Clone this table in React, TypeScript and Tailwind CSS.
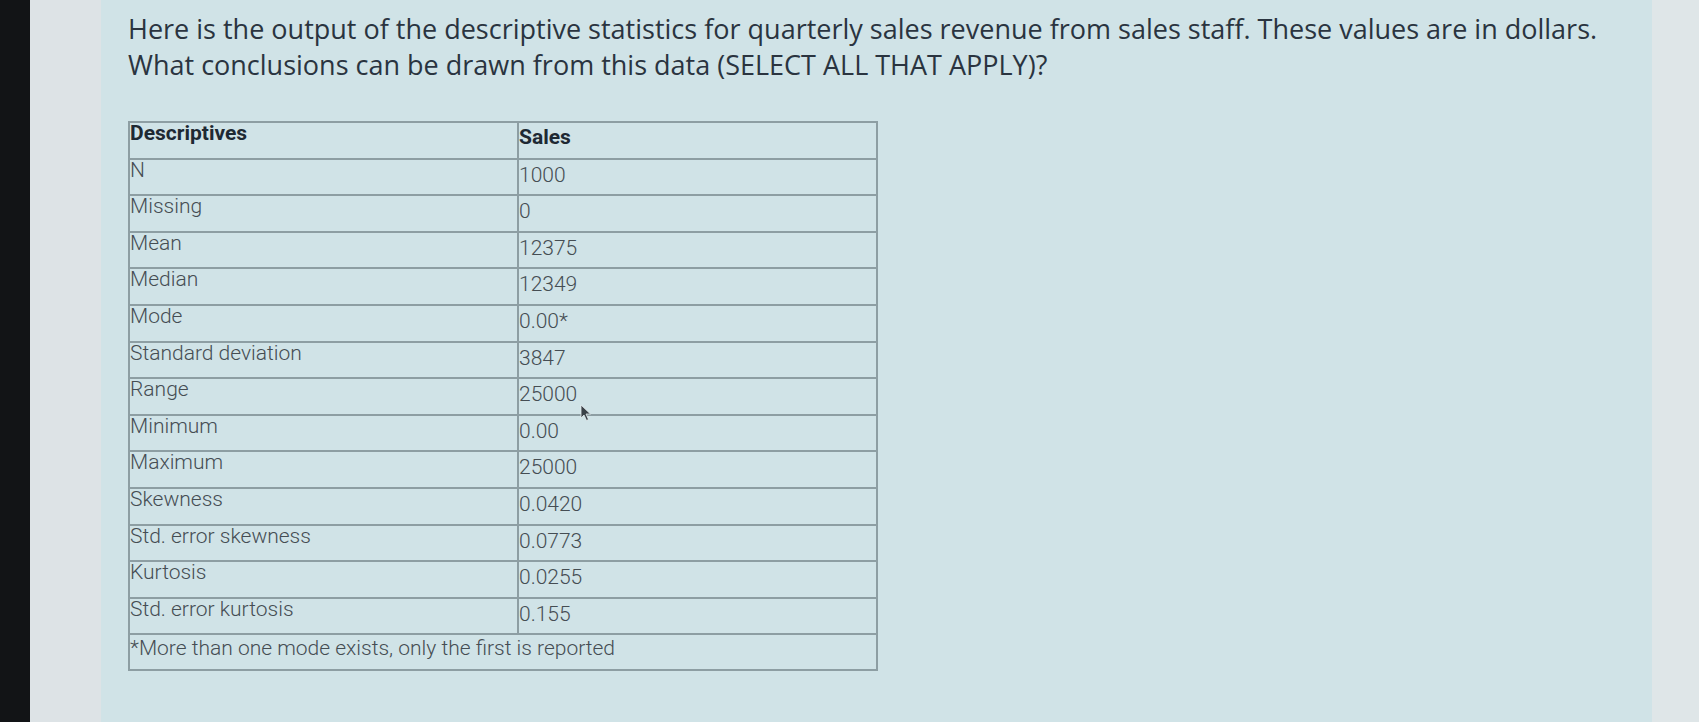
import React from "react";

const rows: [string, string][] = [
  ["N", "1000"],
  ["Missing", "0"],
  ["Mean", "12375"],
  ["Median", "12349"],
  ["Mode", "0.00*"],
  ["Standard deviation", "3847"],
  ["Range", "25000"],
  ["Minimum", "0.00"],
  ["Maximum", "25000"],
  ["Skewness", "0.0420"],
  ["Std. error skewness", "0.0773"],
  ["Kurtosis", "0.0255"],
  ["Std. error kurtosis", "0.155"],
];

function Cursor() {
  return (
    <svg
      className="absolute left-[479px] top-[404px]"
      width="12"
      height="18"
      viewBox="0 0 12 18"
    >
      <path d="M1 1 L1 14 L4 11 L6.5 16.5 L8.5 15.5 L6 10 L10.5 10 Z" fill="#3b4248" stroke="#e7eef0" strokeWidth="0.8" />
    </svg>
  );
}

export default function App() {
  return (
    <div className="flex h-[722px] w-[1699px] overflow-hidden bg-[#0f1112]">
      <div className="w-[30px] bg-[#121416]" />
      <div className="w-[71px] bg-[#dde3e6]" />
      <div className="relative flex-1 bg-[#d0e3e7] pl-[27px] pt-[11px]">
        <p
          className="text-[27px] leading-[36px] text-[#2a3440]"
          style={{ fontFamily: '"Open Sans", sans-serif' }}
        >
          Here is the output of the descriptive statistics for quarterly sales revenue from sales staff. These values are in dollars.
          <br />
          What conclusions can be drawn from this data (SELECT ALL THAT APPLY)?
        </p>
        <div
          className="mt-[38px] w-[750px] border-2 border-[#8d9ea3] text-[21px]"
          style={{ fontFamily: "Roboto, sans-serif" }}
        >
          <div className="flex h-[36.6px] border-b-2 border-[#8d9ea3]">
            <div className="w-[389px] border-r-2 border-[#8d9ea3] leading-[20px] font-bold text-[#1e2933]">Descriptives</div>
            <div className="flex-1 leading-[28px] font-bold text-[#1e2933]">Sales</div>
          </div>
          {rows.map(([label, value], i) => (
            <div key={i} className="flex h-[36.6px] border-b-2 border-[#8d9ea3]">
              <div className="w-[389px] border-r-2 border-[#8d9ea3] leading-[20px] font-light text-[#454d53]">{label}</div>
              <div className="flex-1 pt-[1px] leading-[28px] font-light text-[#454d53]">{value}</div>
            </div>
          ))}
          <div className="h-[34px] leading-[26px] font-light text-[#454d53]">
            *More than one mode exists, only the first is reported
          </div>
        </div>
        <Cursor />
      </div>
      <div className="w-[47px] bg-[#dfe6e8]" />
    </div>
  );
}
